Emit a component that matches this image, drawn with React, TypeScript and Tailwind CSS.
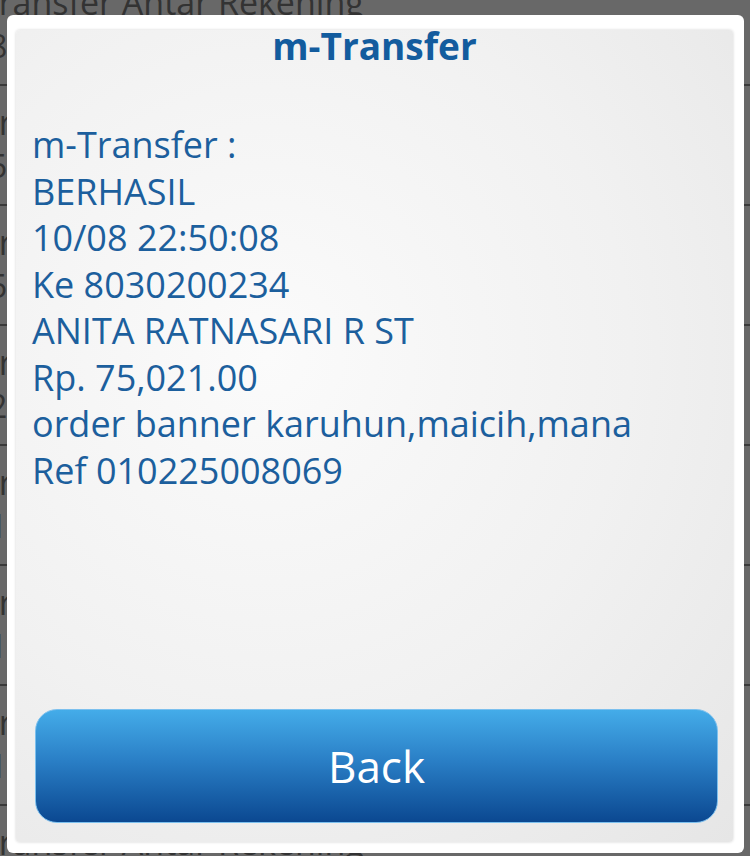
import React from 'react';

const rows = ['8030200234', '5210049871', '5090123378', '2870011452', '1320078816', '1440029913', '1750033302', '8030200234'];

export default function App() {
  return (
    <div className="relative h-[856px] w-[750px] overflow-hidden bg-[#686868] font-['Open_Sans',sans-serif]">
      {/* list behind the dialog */}
      <div className="-mt-[34px] flex flex-col">
        {rows.map((num, i) => (
          <div key={i} className="h-[120px] border-b-2 border-[#3a3a3a] pt-[16px]">
            <div className="-ml-[20px] text-[34px] leading-[40px] text-[#333333]">Transfer Antar Rekening</div>
            <div className="-ml-[11px] mt-[2px] text-[32px] leading-[44px] text-[#333333]">{num}</div>
          </div>
        ))}
      </div>

      {/* dialog */}
      <div className="absolute left-[7px] top-[15px] h-[838px] w-[737px] rounded-[6px] bg-white pb-[11px] pl-[9px] pr-[11px] pt-[15px]">
        <div className="flex h-full flex-col rounded-[4px] bg-[radial-gradient(ellipse_at_35%_40%,#fbfbfb_0%,#f1f1f1_55%,#e6e6e6_100%)] shadow-[0_0_3px_rgba(0,0,0,0.18)]">
          <h1 className="text-center text-[37px] font-bold leading-[32px] text-[#135c9e]">m-Transfer</h1>
          <div className="mt-[60px] pl-[16px] text-[36px] leading-[46.5px] text-[#1c5f9d]">
            <div>m-Transfer :</div>
            <div>BERHASIL</div>
            <div>10/08 22:50:08</div>
            <div>Ke 8030200234</div>
            <div>ANITA RATNASARI R ST</div>
            <div>Rp. 75,021.00</div>
            <div>order banner karuhun,maicih,mana</div>
            <div>Ref 010225008069</div>
          </div>
          <button className="mb-[19px] ml-[19px] mr-[15px] mt-auto flex h-[114px] items-center justify-center rounded-[22px] border border-[#7cc0ee] bg-[linear-gradient(to_bottom,#44ace9_0%,#2a7fc6_45%,#0b4891_100%)] text-[44px] text-white">
            Back
          </button>
        </div>
      </div>
    </div>
  );
}
